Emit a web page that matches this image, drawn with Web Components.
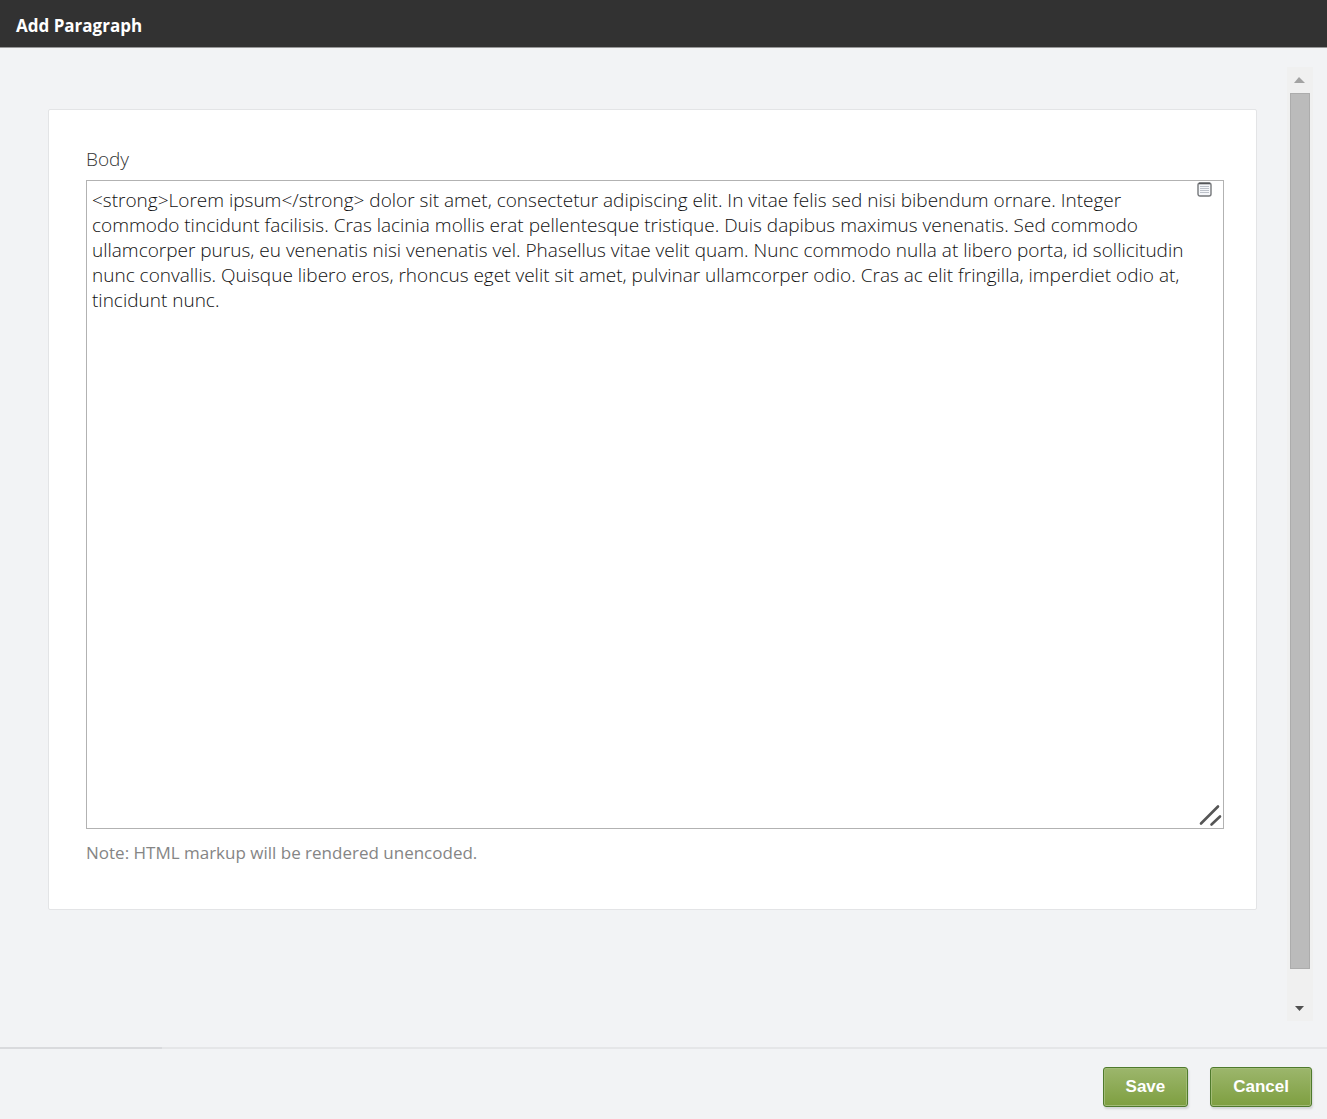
<!DOCTYPE html>
<html lang="en">
<head>
<meta charset="utf-8">
<title>Add Paragraph</title>
<style>
  html, body { height: 100%; margin: 0; }
  body { background: #f2f3f5; font-family: "Open Sans", "Noto Sans", sans-serif; }
</style>
</head>
<body>
<dialog-page>
  <dialog-header slot="header">Add Paragraph</dialog-header>
  <form-card>
    <markup-field name="body">
      <span slot="label">Body</span>
      <span slot="note">Note: HTML markup will be rendered unencoded.</span>
    </markup-field>
  </form-card>
  <scroll-rail slot="rail"></scroll-rail>
  <green-button slot="actions">Save</green-button>
  <green-button slot="actions">Cancel</green-button>
</dialog-page>

<template id="dialog-page">
  <style>
    :host { display: flex; flex-direction: column; min-height: 100vh; }
    .middle { flex: 1; display: flex; align-items: stretch; }
    main { flex: 1; min-width: 0; display: flex; flex-direction: column; padding: 61px 30px 137px 48px; }
    aside { display: flex; padding: 19px 14px 26px 0; }
    .rule { height: 2px; background: linear-gradient(#d9dadd, #d9dadd) left / 162px 2px no-repeat #e5e6e8; }
    footer { display: flex; justify-content: flex-end; gap: 22px; padding: 18px 15px 12px; }
  </style>
  <slot name="header"></slot>
  <div class="middle">
    <main><slot></slot></main>
    <aside><slot name="rail"></slot></aside>
  </div>
  <div class="rule"></div>
  <footer><slot name="actions"></slot></footer>
</template>

<template id="dialog-header">
  <style>
    :host { display: block; background: #323232; border-bottom: 1px solid #989898; color: #fff; }
    h1 { margin: 0; padding: 4px 16px 0; font-size: 17px; line-height: 43px; font-weight: 700; }
  </style>
  <h1><slot></slot></h1>
</template>

<template id="form-card">
  <style>
    :host { flex: 1; display: flex; flex-direction: column; background: #fff; border: 1px solid #e3e4e6; border-radius: 2px; padding: 36px 32px 44px 37px; }
  </style>
  <slot></slot>
</template>

<template id="markup-field">
  <style>
    :host { flex: 1; display: flex; flex-direction: column; }
    label { font-size: 19px; font-weight: 340; line-height: 26px; padding-bottom: 8px; color: #333; }
    .box { flex: 1; display: flex; position: relative; }
    textarea { flex: 1; min-width: 0; box-sizing: border-box; margin: 0; padding: 7px 20px 7px 5px; border: 1px solid #b2b2b2; border-radius: 0; outline: 0; resize: none; overflow: hidden; background: #fff; color: #111; font-family: inherit; font-size: 19px; font-weight: 340; line-height: 25px; }
    svg { position: absolute; }
    .list { top: 2px; right: 11px; }
    .grip { right: 1px; bottom: 1px; }
    .note { font-size: 17px; line-height: 24px; padding-top: 12px; color: #858585; }
  </style>
  <label for="text"><slot name="label"></slot></label>
  <div class="box">
    <textarea id="text" spellcheck="false" aria-describedby="note">&lt;strong&gt;Lorem ipsum&lt;/strong&gt; dolor sit amet, consectetur adipiscing elit. In vitae felis sed nisi bibendum ornare. Integer commodo tincidunt facilisis. Cras lacinia mollis erat pellentesque tristique. Duis dapibus maximus venenatis. Sed commodo ullamcorper purus, eu venenatis nisi venenatis vel. Phasellus vitae velit quam. Nunc commodo nulla at libero porta, id sollicitudin nunc convallis. Quisque libero eros, rhoncus eget velit sit amet, pulvinar ullamcorper odio. Cras ac elit fringilla, imperdiet odio at, tincidunt nunc.</textarea>
    <svg class="list" width="16" height="15" viewBox="0 0 16 15" aria-hidden="true">
      <rect x="1" y="1" width="13" height="13" rx="2" fill="#f5f7fa" stroke="#76787b" stroke-width="1.4"/>
      <path d="M2 1.500h11" stroke="#55575a" stroke-width="1.6"/>
      <path d="M3 4.500h9M3 6.500h9M3 8.500h9M3 10.500h9" stroke="#bcc1c9" stroke-width="1"/>
    </svg>
    <svg class="grip" width="24" height="25" viewBox="0 0 24 25" aria-hidden="true">
      <path d="M2 20.500 19 3.500M12.500 21.500l8.500-8" fill="none" stroke="#555" stroke-width="2.600" stroke-linecap="round"/>
    </svg>
  </div>
  <div class="note" id="note"><slot name="note"></slot></div>
</template>

<template id="scroll-rail">
  <style>
    :host { display: flex; flex-direction: column; align-items: center; width: 26px; background: #f0f0f0; }
    button { display: flex; justify-content: center; align-items: center; width: 100%; height: 26px; margin: 0; padding: 0; border: 0; background: none; }
    .track { flex: 1; display: flex; justify-content: center; width: 100%; padding-bottom: 26px; }
    .thumb { width: 20px; box-sizing: border-box; background: #bbb; border: 1px solid #acacac; }
  </style>
  <button type="button" aria-label="Scroll up"><svg width="12" height="6" viewBox="0 0 12 6"><path d="M0 6 5 0l6 6z" fill="#a3a3a3"/></svg></button>
  <div class="track"><div class="thumb"></div></div>
  <button type="button" aria-label="Scroll down"><svg width="10" height="5" viewBox="0 0 10 5"><path d="M0 0h9L4.500 5z" fill="#505050"/></svg></button>
</template>

<template id="green-button">
  <style>
    :host { display: block; }
    button { display: block; height: 40px; margin: 0; padding: 0 22px; border: 1px solid #4f7a2c; border-radius: 3px; background: linear-gradient(#9cb66c, #7e9f40); box-shadow: inset 0 0 0 1px #a3bc77, 1px 2px 2px #d3d5d6; color: #fff; font: 700 17px/38px "Liberation Sans", Arial, sans-serif; }
  </style>
  <button type="button"><slot></slot></button>
</template>

<script>
  class TemplateElement extends HTMLElement {
    constructor() {
      super();
      const template = document.getElementById(this.localName);
      this.attachShadow({ mode: "open" }).append(template.content.cloneNode(true));
    }
  }
  for (const name of ["dialog-page", "dialog-header", "form-card", "markup-field", "scroll-rail", "green-button"]) {
    customElements.define(name, class extends TemplateElement {});
  }
</script>
</body>
</html>
